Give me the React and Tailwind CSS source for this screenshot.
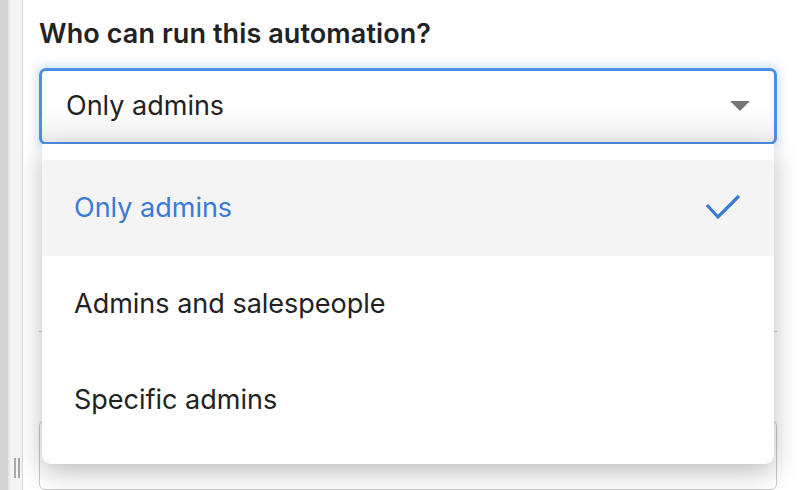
export default function App() {
  const font = { fontFamily: 'Inter, "Liberation Sans", sans-serif' };
  return (
    <div className="w-[804px] h-[490px] overflow-hidden bg-white flex" style={font}>
      {/* left sidebar strip */}
      <div className="w-[23px] h-full flex shrink-0">
        <div className="w-[8px] h-full bg-[#d4d4d4]" />
        <div className="w-[2px] h-full bg-[#e6e6e6]" />
        <div className="flex-1 h-full bg-[#f3f3f3] flex flex-col justify-end items-center pb-[12px]">
          <div className="flex gap-[2px] ml-[1px]">
            <div className="w-[2px] h-[20px] bg-[#a8a8a8]" />
            <div className="w-[2px] h-[20px] bg-[#a8a8a8]" />
          </div>
        </div>
        <div className="w-[1px] h-full bg-[#d9d9d9]" />
      </div>

      {/* main */}
      <div className="flex-1 h-full pl-[16px] pr-[27px] pt-[19px] flex flex-col relative">
        <div className="text-[27px] leading-[30px] font-semibold text-[#222] tracking-[0.1px]">Who can run this automation?</div>

        <div className="relative mt-[19px]">
          <div className="h-[77px] rounded-[7px] border-[3px] border-[#4a90e2] bg-gradient-to-b from-white from-50% to-[#efefef] shadow-[0_0_8px_4px_rgba(74,144,226,0.2)] flex items-center pl-[24px] pr-[24px]">
            <span className="flex-1 text-[27px] text-[#222] -mt-[1px]">Only admins</span>
            <svg width="20" height="10" viewBox="0 0 20 10" className="-mt-[2px]">
              <polygon points="0,0 20,0 10,10" fill="#767676" />
            </svg>
          </div>

          {/* menu */}
          <div className="absolute left-[3px] right-[3px] top-[76px] z-10 bg-white rounded-b-[9px] shadow-[0_8px_26px_rgba(0,0,0,0.26)] py-[16px]">
            <div className="h-[96px] bg-[#f4f4f4] flex items-center pl-[32px] pr-[33px]">
              <span className="flex-1 text-[27px] text-[#3a7bd5] mt-[1px]">Only admins</span>
              <svg width="36" height="28" viewBox="0 0 36 28">
                <polyline points="2,11 13,23 34,2" fill="none" stroke="#3a7bd5" strokeWidth="3.2" />
              </svg>
            </div>
            <div className="h-[96px] flex items-center pl-[32px]">
              <span className="text-[27px] text-[#222] mt-[1px]">Admins and salespeople</span>
            </div>
            <div className="h-[96px] flex items-center pl-[32px]">
              <span className="text-[27px] text-[#222] mt-[1px]">Specific admins</span>
            </div>
          </div>
        </div>

        {/* underlying hidden content */}
        <div className="mt-[186px] h-[1px] bg-[#c8c8c8]" />
        <div className="mt-[88px] h-[80px] border border-[#c8c8c8] rounded-[6px]" />
      </div>
    </div>
  );
}
